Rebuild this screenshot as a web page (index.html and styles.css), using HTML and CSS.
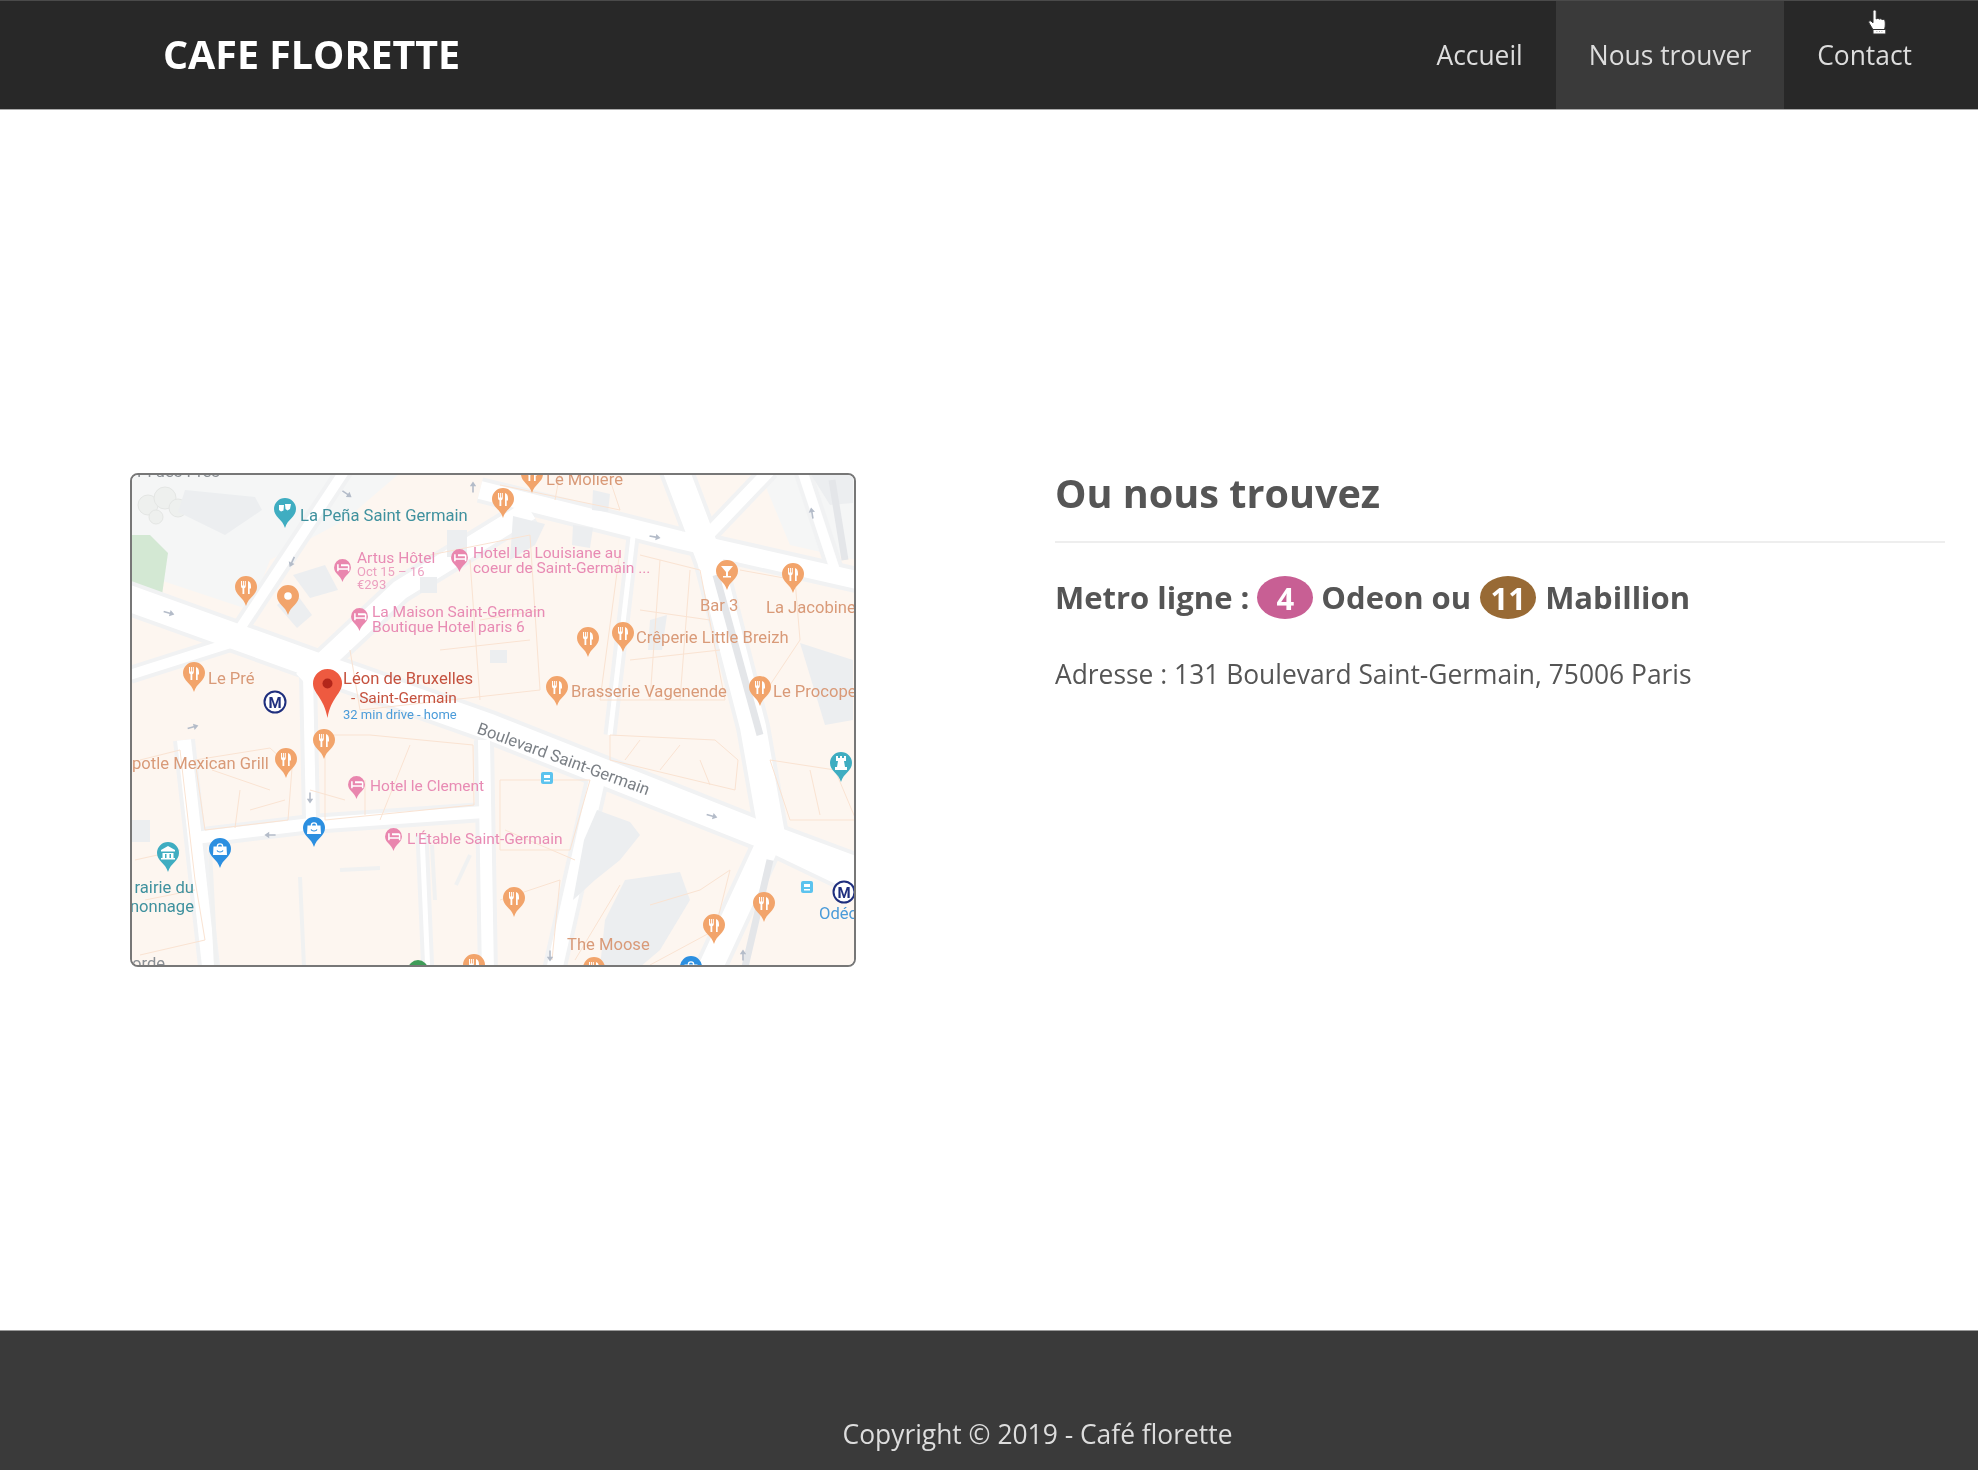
FILE: index.html
```html
<!DOCTYPE html>
<html lang="fr">
<head>
  <meta charset="UTF-8">
  <title>Cafe Florette - Nous trouver</title>
  <link rel="stylesheet" href="styles.css">
</head>
<body>

  <header class="navbar">
    <a class="brand" href="#">CAFE FLORETTE</a>
    <nav class="nav-links">
      <a href="#">Accueil</a>
      <a class="active" href="#">Nous trouver</a>
      <a href="#">Contact</a>
    </nav>
    <svg class="cursor" viewBox="0 0 24 26" width="24" height="26">
      <path d="M6 2.500c0-2 3.200-2 3.200 0v7.500c.8-.8 2.300-.8 3 .2.9-.7 2.300-.5 2.900.5 1-.6 2.400-.3 2.800.8.500 1.500.5 5.500 0 7.500l-.5 2H6.200L2 14c-1-1.500.7-3 2-2l2 1.800z" fill="#fff" stroke="#333" stroke-width="1"/>
      <path d="M6 20.500h12.800V25H6z" fill="#fff" stroke="#333" stroke-width="1"/>
      <path d="M9.500 22.500h.8M12 22.500h.8M14.500 22.500h.8" stroke="#999" stroke-width="1"/>
    </svg>
  </header>

  <main class="content">
    <div class="map">
      <svg viewBox="132 475 722 490" width="722" height="490">
        <defs>
          <symbol id="food" viewBox="0 0 22 30">
            <path d="M11 0a11 11 0 0 1 11 11c0 8-8.500 10-11 19C8.500 21 0 19 0 11A11 11 0 0 1 11 0z"/>
            <path d="M6 5v5c0 1.300.6 2 1.500 2.300V18h1.800v-5.700c.9-.3 1.500-1 1.500-2.300V5h-1v4.500h-.9V5h-1v4.500h-.9V5zM13 5c2 .5 3 2.500 3 5.500v2h-1.300V18H13z" fill="#fff"/>
          </symbol>
          <symbol id="bar" viewBox="0 0 22 30">
            <path d="M11 0a11 11 0 0 1 11 11c0 8-8.500 10-11 19C8.500 21 0 19 0 11A11 11 0 0 1 11 0z"/>
            <path d="M5 6h12l-5 6v4h3v1.500H7V16h3v-4z" fill="#fff"/>
          </symbol>
          <symbol id="spot" viewBox="0 0 22 30">
            <path d="M11 0a11 11 0 0 1 11 11c0 8-8.500 10-11 19C8.500 21 0 19 0 11A11 11 0 0 1 11 0z"/>
            <circle cx="11" cy="11" r="3.800" fill="#fff"/>
          </symbol>
          <symbol id="hotel" viewBox="0 0 22 30">
            <path d="M11 0a11 11 0 0 1 11 11c0 8-8.500 10-11 19C8.500 21 0 19 0 11A11 11 0 0 1 11 0z"/>
            <path d="M4 7h2v5h12v-2.500h-9V7h9c1 0 2 1 2 2v7h-2v-2H6v2H4z" fill="#fff"/>
          </symbol>
          <symbol id="shop" viewBox="0 0 22 30">
            <path d="M11 0a11 11 0 0 1 11 11c0 8-8.500 10-11 19C8.500 21 0 19 0 11A11 11 0 0 1 11 0z"/>
            <path d="M4.500 8.500h3.200a3.300 3.300 0 0 1 6.600 0h3.200L18 17H4zM9 8.500h4a2 2 0 0 0-4 0z" fill="#fff"/>
            <path d="M8 12.500c1 2 5 2 6 0" fill="none" stroke="#2c8fe0" stroke-width="1.200"/>
          </symbol>
          <symbol id="museum" viewBox="0 0 22 30">
            <path d="M11 0a11 11 0 0 1 11 11c0 8-8.500 10-11 19C8.500 21 0 19 0 11A11 11 0 0 1 11 0z"/>
            <path d="M11 4l7 4v1.500H4V8zM5.500 11h11v5h1.500v1.500H4V16h1.500zM8 12v4h1.500v-4zM12.500 12v4H14v-4z" fill="#fff"/>
          </symbol>
          <symbol id="tower" viewBox="0 0 22 30">
            <path d="M11 0a11 11 0 0 1 11 11c0 8-8.500 10-11 19C8.500 21 0 19 0 11A11 11 0 0 1 11 0z"/>
            <path d="M6 4h2v2h2V4h2v2h2V4h2v5h-2l1 6h2v3H5v-3h2l1-6H6z" fill="#fff"/>
          </symbol>
          <symbol id="glass" viewBox="0 0 22 30">
            <path d="M11 0a11 11 0 0 1 11 11c0 8-8.500 10-11 19C8.500 21 0 19 0 11A11 11 0 0 1 11 0z"/>
            <path d="M5 7h5l-.5 5.500-2.500 1-2-1.500zM11 6h6l-1 5-2.500 1.500-2-1.500z" fill="#fff"/>
          </symbol>
          <symbol id="arrow" viewBox="0 0 14 10">
            <path d="M0 4h8V1l6 4-6 4V6H0z"/>
          </symbol>
          <g id="roads" fill="none" stroke-linejoin="round">
            <path class="w26" d="M120 595L320 667 490 727 757 833 870 875"/>
            <path class="w26" d="M672 460L710 560 753 727 772 835"/>
            <path class="w24" d="M772 835L707 975"/>
            <path class="w18" d="M480 490L680 540 870 583"/>
            <path class="w20" d="M530 510L400 590 303 681"/>
            <path class="w10" d="M345 470L237 633"/>
            <path class="w10" d="M308 675L311 820"/>
            <path class="w12" d="M195 838L311 824 484 812"/>
            <path class="w14" d="M184 740L210 975"/>
            <path class="w12" d="M484 740L488 975"/>
            <path class="w16" d="M597 780L553 975"/>
            <path class="w5" d="M633 537L610 735"/>
            <path class="w5" d="M422 835L428 975"/>
            <path class="w12" d="M770 470L703 540"/>
            <path class="w10" d="M802 470L835 570"/>
            <path class="w10" d="M745 835L870 895"/>
            <path class="w10" d="M130 675L240 640"/>
          </g>
        </defs>

        <rect class="land" x="130" y="473" width="726" height="494"/>
        <polygon class="gray-land" points="130,473 400,473 345,520 270,560 250,610 130,570"/>
        <polygon class="gray-land" points="760,473 856,473 856,560 790,545"/>
        <polygon class="park" points="132,535 150,535 168,553 162,595 132,585"/>
        <g class="trees">
          <circle cx="148" cy="505" r="10"/>
          <circle cx="165" cy="498" r="11"/>
          <circle cx="178" cy="508" r="9"/>
          <circle cx="156" cy="517" r="7"/>
        </g>

        <use class="sidewalk" href="#roads"/>
        <use class="road" href="#roads"/>

        <g class="building">
          <polygon points="185,490 255,497 262,510 225,535 178,512"/>
          <polygon points="597,810 630,822 640,835 620,860 595,880 573,900 584,840"/>
          <polygon points="625,880 680,872 690,900 660,950 640,967 600,967 605,920"/>
          <polygon points="593,490 610,494 608,512 592,510"/>
          <polygon points="573,525 593,528 590,548 572,545"/>
          <polygon points="513,516 545,524 535,545 510,560"/>
          <polygon points="800,643 853,660 853,720 825,725"/>
          <polygon points="810,473 853,473 853,503 830,505"/>
          <polygon points="277,605 295,592 312,615 297,628"/>
          <polygon points="293,575 325,565 338,590 310,598"/>
          <polygon points="447,530 467,530 467,557 447,557"/>
          <polygon points="420,577 437,577 437,593 420,593"/>
          <polygon points="132,820 150,820 150,842 132,842"/>
          <polygon points="490,650 507,650 507,663 490,663"/>
          <polygon points="650,620 667,615 662,650 648,650"/>
        </g>
        <g class="edge">
          <path d="M716 575L760 735"/>
          <path d="M770 860L745 967"/>
          <path d="M832 480L845 560"/>
        </g>
        <g class="edge-light">
          <path d="M210 850L216 967"/>
          <path d="M300 877L304 967"/>
          <path d="M432 845L435 900"/>
          <path d="M470 855L456 885"/>
          <path d="M340 870L380 868"/>
        </g>
        <g class="outline">
          <path d="M195 760L270 748 292 768 288 820 205 830z"/>
          <path d="M325 735L370 735 473 745 474 805 325 820z"/>
          <path d="M365 780L365 815M410 745L380 820M310 790L345 800"/>
          <path d="M212 770L270 790M240 790L235 828M250 810L285 800"/>
          <path d="M140 760L180 750 195 880 205 940 140 955"/>
          <path d="M135 860L180 850M145 900L195 890"/>
          <path d="M500 780L590 780 570 850 500 850zM505 830L575 860M500 900L560 880 552 960"/>
          <path d="M610 735L715 740 738 760 735 790 610 760z"/>
          <path d="M640 740L625 760M680 745L660 770M700 760L710 785"/>
          <path d="M640 555L700 570 725 700 600 700 620 550"/>
          <path d="M640 610L710 620M630 660L720 650M660 560L650 700M690 570L680 700"/>
          <path d="M430 555L530 535 540 690 360 710 350 650"/>
          <path d="M480 620L540 610M440 650L530 640M470 560L480 700"/>
          <path d="M500 485L620 510 610 480M560 473L555 500"/>
          <path d="M650 905L700 890 730 870 715 930 650 965"/>
          <path d="M770 760L835 770 856 820 790 820z"/>
          <path d="M810 770L820 815"/>
          <path d="M740 570L795 580 800 640 760 700"/>
          <path d="M620 885L575 960"/>
        </g>

        <g class="arrows">
          <use href="#arrow" transform="translate(341 490) rotate(35 6 4)" width="12" height="8"/>
          <use href="#arrow" transform="translate(467 483) rotate(-90 6 4)" width="12" height="8"/>
          <use href="#arrow" transform="translate(286 558) rotate(115 6 4)" width="12" height="8"/>
          <use href="#arrow" transform="translate(163 609) rotate(15 6 4)" width="12" height="8"/>
          <use href="#arrow" transform="translate(187 723) rotate(-15 6 4)" width="12" height="8"/>
          <use href="#arrow" transform="translate(304 794) rotate(90 6 4)" width="12" height="8"/>
          <use href="#arrow" transform="translate(264 831) rotate(180 6 4)" width="12" height="8"/>
          <use href="#arrow" transform="translate(706 812) rotate(15 6 4)" width="12" height="8"/>
          <use href="#arrow" transform="translate(544 952) rotate(90 6 4)" width="12" height="8"/>
          <use href="#arrow" transform="translate(737 951) rotate(-90 6 4)" width="12" height="8"/>
          <use href="#arrow" transform="translate(649 533) rotate(10 6 4)" width="12" height="8"/>
          <use href="#arrow" transform="translate(806 509) rotate(-100 6 4)" width="12" height="8"/>
        </g>

        <g class="pins-orange">
          <use href="#food" x="235" y="576" width="22" height="30"/>
          <use href="#spot" x="277" y="585" width="22" height="30"/>
          <use href="#food" x="183" y="662" width="22" height="30"/>
          <use href="#food" x="521" y="463" width="22" height="30"/>
          <use href="#food" x="492" y="488" width="22" height="30"/>
          <use href="#bar" x="716" y="560" width="22" height="30"/>
          <use href="#food" x="782" y="563" width="22" height="30"/>
          <use href="#food" x="577" y="627" width="22" height="30"/>
          <use href="#food" x="612" y="622" width="22" height="30"/>
          <use href="#food" x="546" y="676" width="22" height="30"/>
          <use href="#food" x="749" y="676" width="22" height="30"/>
          <use href="#food" x="275" y="748" width="22" height="30"/>
          <use href="#food" x="313" y="729" width="22" height="30"/>
          <use href="#food" x="463" y="954" width="22" height="30"/>
          <use href="#food" x="503" y="887" width="22" height="30"/>
          <use href="#food" x="703" y="914" width="22" height="30"/>
          <use href="#food" x="753" y="892" width="22" height="30"/>
          <use href="#food" x="583" y="957" width="22" height="30"/>
        </g>
        <g class="pins-pink">
          <use href="#hotel" x="334" y="559" width="17" height="23"/>
          <use href="#hotel" x="451" y="549" width="17" height="23"/>
          <use href="#hotel" x="351" y="608" width="17" height="23"/>
          <use href="#hotel" x="348" y="776" width="17" height="23"/>
          <use href="#hotel" x="385" y="828" width="17" height="23"/>
        </g>
        <g class="pins-blue">
          <use href="#shop" x="303" y="817" width="22" height="30"/>
          <use href="#shop" x="209" y="838" width="22" height="30"/>
          <use href="#shop" x="680" y="956" width="22" height="30"/>
        </g>
        <g class="pins-teal">
          <use href="#glass" x="274" y="498" width="22" height="30"/>
          <use href="#museum" x="157" y="842" width="22" height="30"/>
          <use href="#tower" x="830" y="752" width="22" height="30"/>
        </g>
        <circle class="pin-green" cx="418" cy="970" r="10"/>

        <path class="pin-red" d="M327.500 669a14.500 14.500 0 0 1 14.500 14.500c0 10-11 14-14.500 34.500-3.500-20.500-14.500-24.500-14.500-34.500A14.500 14.500 0 0 1 327.500 669z"/>
        <circle class="pin-red-dot" cx="327.500" cy="683.500" r="5"/>

        <g class="metro">
          <circle cx="275" cy="702" r="10.500"/>
          <text x="275" y="707.500" text-anchor="middle">M</text>
          <circle cx="844" cy="892" r="10.500"/>
          <text x="844" y="897.500" text-anchor="middle">M</text>
        </g>
        <g class="bus">
          <rect x="541" y="772" width="12" height="12" rx="2"/>
          <rect x="801" y="881" width="12" height="12" rx="2"/>
          <path class="bus-glass" d="M544 775h6v3h-6zM804 884h6v3h-6z"/>
          <path class="bus-glass" d="M544 780h6v1.500h-6zM804 889h6v1.500h-6z"/>
        </g>

        <g class="labels">
          <text class="gray" x="137" y="477">Pl des Pres</text>
          <text class="gray" x="132" y="969">orde</text>
          <text class="teal" x="300" y="521">La Peña Saint Germain</text>
          <text class="pink" x="357" y="563">Artus Hôtel</text>
          <text class="pink small pale" x="357" y="576">Oct 15 – 16</text>
          <text class="pink small pale" x="357" y="589">€293</text>
          <text class="pink" x="473" y="558">Hotel La Louisiane au</text>
          <text class="pink" x="473" y="573">coeur de Saint-Germain ...</text>
          <text class="pink" x="372" y="617">La Maison Saint-Germain</text>
          <text class="pink" x="372" y="632">Boutique Hotel paris 6</text>
          <text class="brown" x="208" y="684">Le Pré</text>
          <text class="red" x="343" y="684">Léon de Bruxelles</text>
          <text class="red thin" x="351" y="703">- Saint-Germain</text>
          <text class="sky small" x="343" y="719">32 min drive - home</text>
          <text class="brown" x="546" y="485">Le Molière</text>
          <text class="brown" x="700" y="611">Bar 3</text>
          <text class="brown" x="766" y="613">La Jacobine</text>
          <text class="brown" x="636" y="643">Crêperie Little Breizh</text>
          <text class="brown" x="571" y="697">Brasserie Vagenende</text>
          <text class="brown" x="773" y="697">Le Procope</text>
          <text class="brown" x="132" y="769">potle Mexican Grill</text>
          <text class="pink" x="370" y="791">Hotel le Clement</text>
          <text class="pink" x="407" y="844">L'Étable Saint-Germain</text>
          <text class="teal" x="194" y="893" text-anchor="end">rairie du</text>
          <text class="teal" x="194" y="912" text-anchor="end">nonnage</text>
          <text class="street" transform="translate(476 733) rotate(20)">Boulevard Saint-Germain</text>
          <text class="brown" x="567" y="950">The Moose</text>
          <text class="sky large" x="819" y="919">Odéon</text>
        </g>
      </svg>
    </div>

    <section class="infos">
      <h2>Ou nous trouvez</h2>
      <p class="metro-line">
        Metro ligne :
        <span class="ligne ligne-4">4</span>
        Odeon ou
        <span class="ligne ligne-11">11</span>
        Mabillion
      </p>
      <p class="adresse">Adresse : 131 Boulevard Saint-Germain, 75006 Paris</p>
    </section>
  </main>

  <footer class="footer">
    <p>Copyright © 2019 - Café florette</p>
  </footer>

</body>
</html>
```

FILE: styles.css
```css
body {
  margin: 0;
  min-height: 1470px;
  display: flex;
  flex-direction: column;
  font-family: "Open Sans", sans-serif;
  color: #555;
  background: #fff;
}

a {
  text-decoration: none;
  color: inherit;
}

.navbar {
  position: relative;
  height: 110px;
  box-sizing: border-box;
  display: flex;
  justify-content: space-between;
  padding: 0 33px 0 163px;
  background: #282828;
  border-top: 1px solid #4a4a4a;
  border-bottom: 1px solid #aaa;
}

.brand {
  align-self: center;
  margin-bottom: 2px;
  font-size: 39.4px;
  font-weight: 700;
  color: #fff;
  filter: blur(0.4px);
}

.nav-links {
  display: flex;
}

.nav-links a {
  display: flex;
  align-items: center;
  padding: 0 33px 1px;
  font-size: 26.4px;
  color: #ddd;
  filter: blur(0.3px);
}

.nav-links .active {
  background: #3a3a3a;
}

.cursor {
  position: absolute;
  left: 1867px;
  top: 8px;
}

.content {
  flex: 1;
  display: flex;
  align-items: center;
  padding: 0 33px 0 130px;
}

.map {
  flex: none;
  width: 726px;
  height: 494px;
  box-sizing: border-box;
  border: 2px solid #777;
  border-radius: 8px;
  overflow: hidden;
}

.map svg {
  display: block;
  filter: blur(0.7px);
}

.land {
  fill: #fdf6f0;
}

.gray-land {
  fill: #f5f6f6;
}

.park {
  fill: #d3e8d3;
}

.trees {
  fill: #eef0ee;
  stroke: #e4e6e4;
  stroke-width: 1px;
}

.sidewalk {
  --extra: 8px;
  stroke: #f1f2f3;
}

.road {
  --extra: 0px;
  stroke: #fff;
}

.w26 { stroke-width: calc(26px + var(--extra)); }
.w24 { stroke-width: calc(24px + var(--extra)); }
.w20 { stroke-width: calc(20px + var(--extra)); }
.w18 { stroke-width: calc(18px + var(--extra)); }
.w16 { stroke-width: calc(16px + var(--extra)); }
.w14 { stroke-width: calc(14px + var(--extra)); }
.w12 { stroke-width: calc(12px + var(--extra)); }
.w10 { stroke-width: calc(10px + var(--extra)); }
.w5 { stroke-width: calc(5px + var(--extra)); }

.building {
  fill: #eceef0;
}

.edge {
  fill: none;
  stroke: #e4e6e9;
  stroke-width: 7px;
}

.edge-light {
  fill: none;
  stroke: #f0f1f1;
  stroke-width: 4px;
}

.outline {
  fill: none;
  stroke: #fae3d2;
  stroke-width: 1px;
}

.arrows {
  fill: #b4bcc9;
}

.pins-orange { fill: #f2a46b; }
.pins-pink { fill: #e986ae; }
.pins-blue { fill: #2c8fe0; }
.pins-teal { fill: #3fadc1; }
.pin-green { fill: #3f9c58; }
.pin-red { fill: #ee5a40; }
.pin-red-dot { fill: #b3261a; }

.metro circle {
  fill: #fff;
  stroke: #1f2f7e;
  stroke-width: 2px;
}

.metro text {
  font: 700 15px Roboto, sans-serif;
  fill: #1f2f7e;
}

.bus rect {
  fill: #5cc3ee;
}

.bus-glass {
  fill: #fff;
}

.labels text {
  font-family: Roboto, sans-serif;
  font-size: 16.6px;
}

.labels .pink,
.labels .thin {
  font-size: 15.5px;
}

.labels .small {
  font-size: 13px;
}

.labels .gray { fill: #8a8f94; }
.labels .teal { fill: #3f919e; }
.labels .pink { fill: #e88bb4; }
.labels .pale { opacity: 0.8; }
.labels .brown { fill: #d99a78; }
.labels .red { fill: #c5523f; }
.labels .sky { fill: #4a9bd9; }
.labels .street { fill: #7a7f85; }

.infos {
  flex: 1;
  height: 494px;
  margin-left: 199px;
  filter: blur(0.4px);
}

.infos h2 {
  margin: 0;
  padding-bottom: 28px;
  border-bottom: 2px solid #eee;
  font-size: 39.6px;
  line-height: 40px;
  font-weight: 700;
  color: #555;
}

.metro-line {
  margin: 32px 0 0;
  display: flex;
  align-items: center;
  gap: 8px;
  font-size: 31px;
  line-height: 44px;
  font-weight: 700;
}

.ligne {
  width: 56px;
  height: 43px;
  border-radius: 50%;
  text-align: center;
  color: #fff;
}

.ligne-4 {
  background: #c85f94;
}

.ligne-11 {
  margin: 0 1px;
  background: #986a35;
}

.adresse {
  margin: 37px 0 0;
  font-size: 26.4px;
  line-height: 36px;
}

.footer {
  height: 140px;
  box-sizing: border-box;
  padding: 0 33px 0 130px;
  background: #3a3a3a;
  border-top: 1px solid #999;
  color: #ddd;
  text-align: center;
}

.footer p {
  margin: 85px 0 0;
  font-size: 26.4px;
  line-height: 36px;
  filter: blur(0.4px);
}
```
